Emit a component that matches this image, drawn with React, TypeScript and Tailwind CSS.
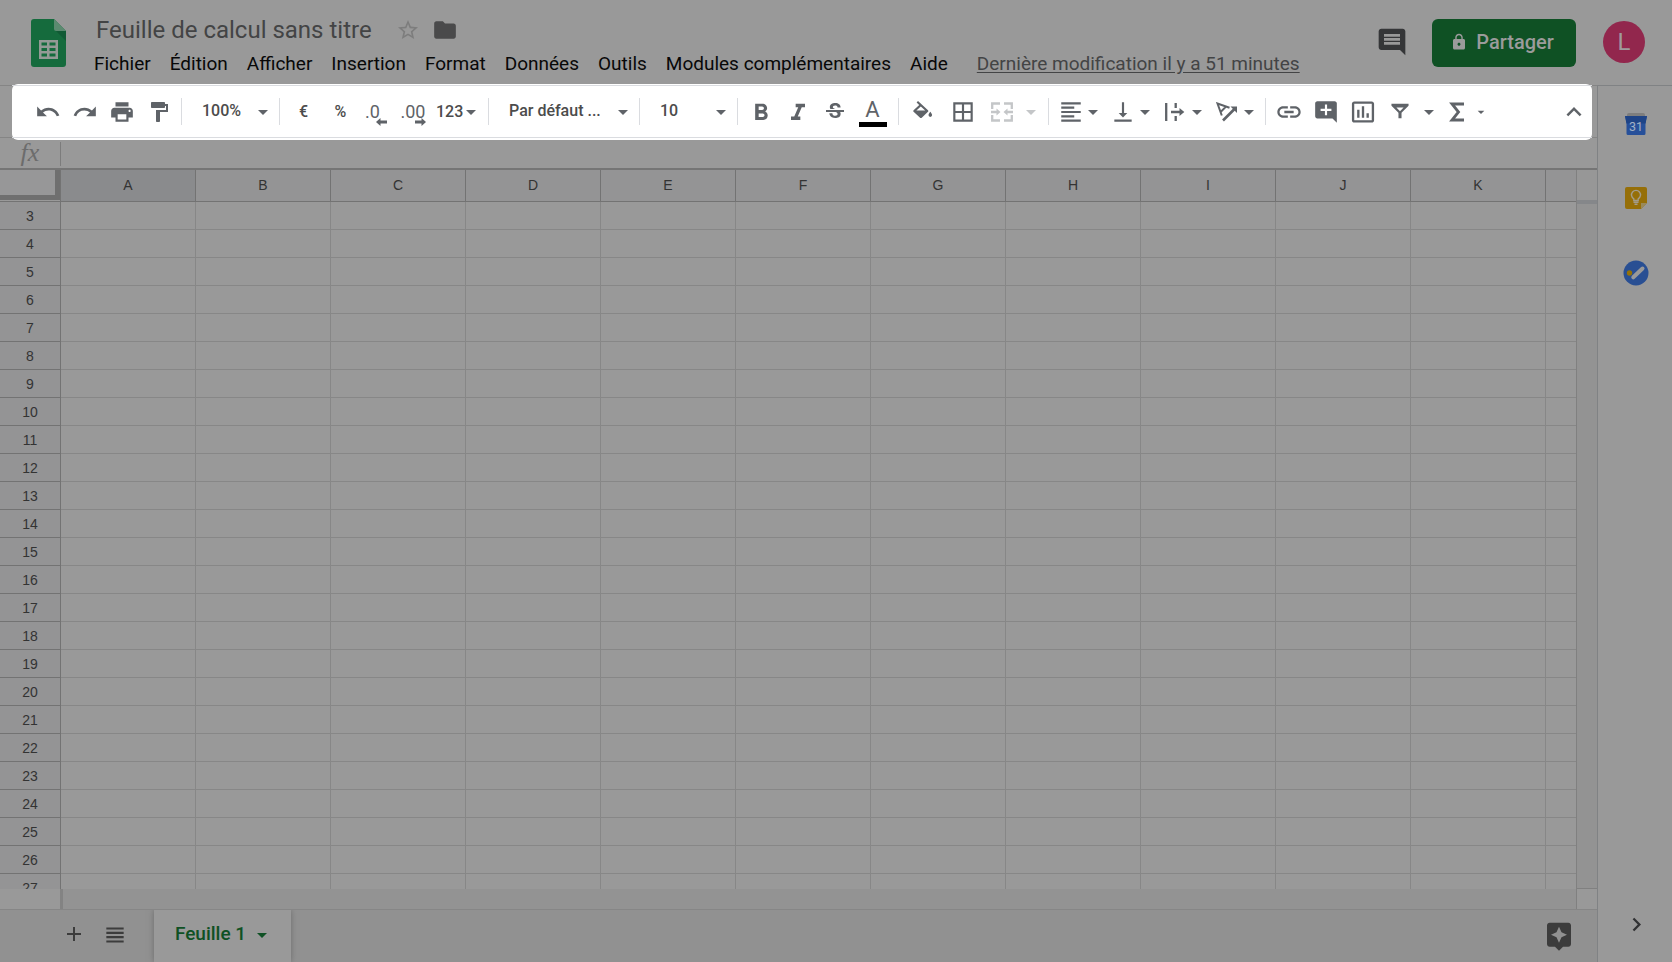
import type { ReactNode } from "react";
import {
  MdAdd,
  MdAddComment,
  MdArrowDropDown,
  MdAssistant,
  MdBorderAll,
  MdFolder,
  MdFormatAlignLeft,
  MdFormatBold,
  MdFormatItalic,
  MdFormatPaint,
  MdInsertChartOutlined,
  MdInsertComment,
  MdKeyboardArrowRight,
  MdKeyboardArrowUp,
  MdLink,
  MdLock,
  MdPrint,
  MdRedo,
  MdStarBorder,
  MdStrikethroughS,
  MdUndo,
  MdVerticalAlignBottom,
  MdViewHeadline,
} from "react-icons/md";

const menus = [
  "Fichier",
  "Édition",
  "Afficher",
  "Insertion",
  "Format",
  "Données",
  "Outils",
  "Modules complémentaires",
  "Aide",
];
const columns = ["A", "B", "C", "D", "E", "F", "G", "H", "I", "J", "K"];
const rows = Array.from({ length: 25 }, (_, i) => i + 3);

function SheetsLogo() {
  return (
    <svg width="35" height="48" viewBox="0 0 35 48" aria-hidden="true">
      <path d="M3 0H23L35 12V45a3 3 0 0 1-3 3H3a3 3 0 0 1-3-3V3a3 3 0 0 1 3-3z" fill="#156b3d" />
      <path d="M25 12H35V22z" fill="#115a35" />
      <path d="M23 0L35 12H25a2 2 0 0 1-2-2z" fill="#5b8a70" />
      <path
        fillRule="evenodd"
        d="M8 21H27V40H8zM10.500 23.500V26.500H16V23.500zM18.500 23.500V26.500H24.500V23.500zM10.500 29V32H16V29zM18.500 29V32H24.500V29zM10.500 34.500V37.500H16V34.500zM18.500 34.500V37.500H24.500V34.500z"
        fill="#949a96"
      />
    </svg>
  );
}

function FillIcon() {
  return (
    <svg width="20" height="18" viewBox="0 0 20 18" fill="currentColor" aria-hidden="true" className="mb-1">
      <path
        fillRule="evenodd"
        d="M5 0L15 9.200a1.200 1.200 0 0 1 0 1.600L9 16.400a1.500 1.500 0 0 1-2.200 0L.6 10.800a1.200 1.200 0 0 1 0-1.600L6.200 3.900L3.600 1.500zM7.800 5.400L3.400 9.500H12.200z"
      />
      <path d="M17.300 10.800s1.800 2 1.800 3.300a1.800 1.800 0 0 1-3.600 0c0-1.300 1.800-3.300 1.800-3.300z" />
    </svg>
  );
}

function MergeIcon() {
  return (
    <svg width="22" height="20" viewBox="0 0 22 20" aria-hidden="true">
      <path
        d="M1.200 7V1.500H9M13 1.500H20.800V7M20.800 13V18.500H13M9 18.500H1.200V13M0 10H6M22 10H16"
        fill="none"
        stroke="currentColor"
        strokeWidth="2.300"
      />
      <path d="M5.500 6.500L9.500 10L5.500 13.500zM16.500 6.500L12.500 10L16.500 13.500z" fill="currentColor" />
    </svg>
  );
}

function OverflowIcon() {
  return (
    <svg width="20" height="20" viewBox="0 0 20 20" aria-hidden="true">
      <path
        d="M1.200 1V19M10.700 1V6M10.700 14V19M6 10H16"
        fill="none"
        stroke="currentColor"
        strokeWidth="2.300"
      />
      <path d="M14.500 6L19.300 10L14.500 14z" fill="currentColor" />
    </svg>
  );
}

function RotateIcon() {
  return (
    <svg width="22" height="20" viewBox="0 0 22 20" aria-hidden="true">
      <path
        d="M13.500 5.800L1.500 1.500L5.800 13.500M10 4.600L4.600 10"
        fill="none"
        stroke="currentColor"
        strokeWidth="2"
      />
      <path d="M7 18.500L18.500 7" fill="none" stroke="currentColor" strokeWidth="2.600" />
      <path d="M14.500 4.500H21V11z" fill="currentColor" />
    </svg>
  );
}

function FilterIcon() {
  return (
    <svg width="20" height="17" viewBox="0 0 20 17" fill="currentColor" aria-hidden="true">
      <path fillRule="evenodd" d="M.5 0H19.500V2L11.700 10V16H8.300V10L.5 2zM6 4L10 8.300L14 4z" />
    </svg>
  );
}

function SumIcon() {
  return (
    <svg width="16" height="20" viewBox="0 0 16 20" aria-hidden="true">
      <path d="M15 2H3L9.500 10L3 18H15" fill="none" stroke="currentColor" strokeWidth="2.800" />
    </svg>
  );
}

function CalendarIcon() {
  return (
    <svg width="22" height="22" viewBox="0 0 22 22" aria-hidden="true">
      <path d="M2 2a2 2 0 0 1 2-2H18a2 2 0 0 1 2 2V5H2z" fill="#7e7e7e" />
      <path d="M0 3H22L20.500 10.500V20.500a1.500 1.500 0 0 1-1.500 1.500H3a1.500 1.500 0 0 1-1.500-1.500V10.500z" fill="#27509a" />
      <path d="M0 3H22L20.500 10.500H1.500z" fill="#1f4487" />
      <text x="11" y="17.500" textAnchor="middle" fontFamily="Roboto, sans-serif" fontSize="12.500" fill="#a3b0c4">
        31
      </text>
    </svg>
  );
}

function KeepIcon() {
  return (
    <svg width="22" height="22" viewBox="0 0 22 22" aria-hidden="true">
      <path d="M2 0H20a2 2 0 0 1 2 2V16L16 22H2a2 2 0 0 1-2-2V2a2 2 0 0 1 2-2z" fill="#966f08" />
      <path d="M16 22V16H22z" fill="#998a5c" />
      <path
        d="M8.800 13.500V11.800a4.500 4.500 0 1 1 4.400 0V13.500zM8.500 15.200H13.500M9.500 17.200H12.500"
        fill="none"
        stroke="#a39c8a"
        strokeWidth="1.400"
      />
    </svg>
  );
}

function TasksIcon() {
  return (
    <svg width="26" height="26" viewBox="0 0 26 26" aria-hidden="true">
      <circle cx="13" cy="13" r="12.500" fill="#294f93" />
      <path d="M10.300 17.300L19.500 8.500" stroke="#999" strokeWidth="4" strokeLinecap="round" />
      <circle cx="6.500" cy="13" r="2.700" fill="#967208" />
    </svg>
  );
}

function Tool({ label, wide = false, children }: { label: string; wide?: boolean; children: ReactNode }) {
  return (
    <button
      type="button"
      aria-label={label}
      className={
        wide
          ? "relative flex h-10 w-10 shrink-0 items-center justify-center"
          : "relative flex h-10 w-[37px] shrink-0 items-center justify-center"
      }
    >
      {children}
    </button>
  );
}

function MenuTool({ label, children }: { label: string; children: ReactNode }) {
  return (
    <button type="button" aria-label={label} className="flex h-10 w-[52px] shrink-0 items-center">
      <span className="flex w-9 justify-center">{children}</span>
      <MdArrowDropDown size={24} className="-ml-2 shrink-0" />
    </button>
  );
}

function Separator() {
  return <span className="mx-1 h-[27px] w-px shrink-0 bg-[#dadce0]" />;
}

function Picker({ label, value, wide = false }: { label: string; value: string; wide?: boolean }) {
  return (
    <div className={wide ? "relative w-[142px] shrink-0" : "relative w-[89px] shrink-0"}>
      <select
        aria-label={label}
        className="h-10 w-full appearance-none bg-transparent pb-px pl-4 text-base font-medium text-[#4c4c4c]"
      >
        <option>{value}</option>
      </select>
      <MdArrowDropDown size={24} className="pointer-events-none absolute top-2 right-0" />
    </div>
  );
}

function Header() {
  return (
    <header className="flex h-[84px] shrink-0 items-start pr-[27px] pl-[31px]">
      <a href="#accueil" aria-label="Accueil Sheets" className="mt-[19px]">
        <SheetsLogo />
      </a>
      <div className="ml-7 flex min-w-0 flex-1 flex-col pt-[14px]">
        <div className="flex h-8 items-center pl-[2px]">
          <h1 className="text-2xl whitespace-nowrap text-[#434445]">Feuille de calcul sans titre</h1>
          <button type="button" aria-label="Suivre" className="ml-6 text-[#7d7d7d]">
            <MdStarBorder size={24} />
          </button>
          <button type="button" aria-label="Déplacer" className="ml-3 text-[#4a4a4b]">
            <MdFolder size={26} />
          </button>
        </div>
        <nav className="flex h-9 items-center gap-[19px] text-[19px] whitespace-nowrap text-[#080808]">
          {menus.map((m) => (
            <button type="button" key={m}>
              {m}
            </button>
          ))}
          <a href="#historique" className="ml-[10px] text-[#434445] underline underline-offset-2">
            Dernière modification il y a 51 minutes
          </a>
        </nav>
      </div>
      <button type="button" aria-label="Commentaires" className="mt-[26px] text-[#353638]">
        <MdInsertComment size={32} />
      </button>
      <button
        type="button"
        className="mt-[19px] ml-6 flex h-12 w-36 items-center justify-center gap-2 rounded-md bg-[#0f5124] pr-1 pb-[2px] text-xl font-medium text-[#9b9b9b]"
      >
        <MdLock size={18} />
        Partager
      </button>
      <button
        type="button"
        aria-label="Compte"
        className="mt-[21px] ml-[27px] flex h-[42px] w-[42px] items-center justify-center rounded-full bg-[#92274d] text-2xl text-[#a09a9c]"
      >
        L
      </button>
    </header>
  );
}

function Toolbar() {
  return (
    <div className="flex h-14 shrink-0">
      <div className="mt-px mb-[2px] w-3 border-y border-[#858585]" />
      <div className="min-w-0 flex-1 rounded-md bg-white pt-px pb-[2px]">
        <div
          role="toolbar"
          aria-label="Mise en forme"
          className="flex h-full items-center border-y border-[#dadce0] pl-[17px] text-[#5f6368]"
        >
          <Tool label="Annuler"><MdUndo size={26} /></Tool>
          <Tool label="Rétablir"><MdRedo size={26} /></Tool>
          <Tool label="Imprimer"><MdPrint size={26} /></Tool>
          <Tool label="Copier la mise en forme"><MdFormatPaint size={24} /></Tool>
          <Separator />
          <Picker label="Zoom" value="100%" />
          <Separator />
          <Tool label="Format devise"><span className="pl-[2px] text-base font-medium text-[#4c4c4c]">€</span></Tool>
          <Tool label="Format pourcentage"><span className="pl-[2px] text-base font-medium text-[#4c4c4c]">%</span></Tool>
          <Tool label="Réduire les décimales">
            <span className="pr-2 text-lg">.0</span>
            <svg className="absolute right-2 bottom-1.5" width="11" height="8" viewBox="0 0 11 8" aria-hidden="true">
              <path d="M0 4L4.500 0V2.600H11V5.400H4.500V8z" fill="currentColor" />
            </svg>
          </Tool>
          <Tool label="Augmenter les décimales">
            <span className="pr-px text-lg">.00</span>
            <svg className="absolute right-1.5 bottom-1.5" width="11" height="8" viewBox="0 0 11 8" aria-hidden="true">
              <path d="M11 4L6.500 0V2.600H0V5.400H6.500V8z" fill="currentColor" />
            </svg>
          </Tool>
          <button type="button" aria-label="Autres formats" className="flex h-10 w-[52px] shrink-0 items-center pl-1">
            <span className="text-base font-medium text-[#4c4c4c]">123</span>
            <MdArrowDropDown size={24} className="-ml-1 shrink-0" />
          </button>
          <Separator />
          <Picker label="Police" value="Par défaut ..." wide />
          <Separator />
          <Picker label="Taille" value="10" />
          <Separator />
          <Tool label="Gras"><MdFormatBold size={28} className="mt-[2px]" /></Tool>
          <Tool label="Italique"><MdFormatItalic size={28} className="mt-[2px]" /></Tool>
          <Tool label="Barré"><MdStrikethroughS size={24} /></Tool>
          <button
            type="button"
            aria-label="Couleur du texte"
            className="flex h-10 w-[41px] shrink-0 flex-col items-center justify-center pt-px pr-[2px]"
          >
            <span className="text-[22px] leading-6">A</span>
            <span className="h-[5px] w-7 bg-black" />
          </button>
          <Separator />
          <Tool label="Couleur de remplissage" wide><FillIcon /></Tool>
          <Tool label="Bordures" wide><MdBorderAll size={26} /></Tool>
          <button
            type="button"
            disabled
            aria-label="Fusionner les cellules"
            className="flex h-10 w-[61px] shrink-0 items-center pl-2 text-[#c4c6c8]"
          >
            <MergeIcon />
            <MdArrowDropDown size={24} className="ml-1.5 shrink-0" />
          </button>
          <Separator />
          <MenuTool label="Alignement horizontal"><MdFormatAlignLeft size={26} /></MenuTool>
          <MenuTool label="Alignement vertical"><MdVerticalAlignBottom size={26} /></MenuTool>
          <MenuTool label="Retour à la ligne"><OverflowIcon /></MenuTool>
          <MenuTool label="Rotation du texte"><RotateIcon /></MenuTool>
          <Separator />
          <Tool label="Insérer un lien"><MdLink size={28} /></Tool>
          <Tool label="Insérer un commentaire"><MdAddComment size={26} /></Tool>
          <Tool label="Insérer un graphique"><MdInsertChartOutlined size={28} /></Tool>
          <button type="button" aria-label="Filtrer" className="flex h-10 w-[60px] shrink-0 items-center pl-2.5">
            <FilterIcon />
            <MdArrowDropDown size={24} className="ml-2 shrink-0" />
          </button>
          <button type="button" aria-label="Fonctions" className="flex h-10 shrink-0 items-center pl-2">
            <SumIcon />
            <MdArrowDropDown size={16} className="ml-2 shrink-0" />
          </button>
          <div className="ml-auto">
            <Tool label="Masquer les menus"><MdKeyboardArrowUp size={30} /></Tool>
          </div>
        </div>
      </div>
      <div className="mt-px mb-[2px] w-[5px] border-y border-[#858585]" />
    </div>
  );
}

function Grid() {
  return (
    <div className="flex min-h-0 flex-1">
      <div className="min-w-0 flex-1 overflow-hidden">
        <table className="w-full table-fixed border-separate border-spacing-0 font-['Liberation_Sans',sans-serif] text-sm text-[#333]">
          <thead>
            <tr className="h-8">
              <th className="w-[61px] border-r border-b border-[#737373] p-0 align-top">
                <div className="h-[30px] w-full border-r-[5px] border-b-[5px] border-[#6f6f6f] bg-[#979798]" />
              </th>
              {columns.map((c) => (
                <th
                  key={c}
                  scope="col"
                  className={
                    c === "A"
                      ? "w-[135px] border-r border-b border-[#737373] bg-[#8a8b8d] p-0 pb-[2px] font-normal"
                      : "w-[135px] border-r border-b border-[#737373] bg-[#949495] p-0 pb-[2px] font-normal"
                  }
                >
                  {c}
                </th>
              ))}
              <th className="border-b border-[#737373] bg-[#949495] p-0" />
            </tr>
          </thead>
          <tbody>
            {rows.map((r) => (
              <tr key={r} className="h-7">
                <th scope="row" className="border-r border-b border-[#737373] bg-[#949495] p-0 font-normal">
                  {r}
                </th>
                {columns.map((c) => (
                  <td key={c} className="border-r border-b border-[#878787] p-0" />
                ))}
                <td className="border-b border-[#878787] p-0" />
              </tr>
            ))}
          </tbody>
        </table>
      </div>
      <div className="flex w-[21px] flex-col border-b border-l border-[#808080] bg-[#939393]">
        <div className="h-[30px] bg-[#979797]" />
        <div className="h-1 bg-[#85878a]" />
      </div>
    </div>
  );
}

function SheetTabs() {
  return (
    <footer className="flex h-[53px] shrink-0 items-center overflow-hidden border-t border-[#868686] bg-[#919191] text-[#3c3c3c]">
      <button type="button" aria-label="Ajouter une feuille" className="ml-[62px] pb-1">
        <MdAdd size={24} />
      </button>
      <button type="button" aria-label="Toutes les feuilles" className="ml-4 pb-[2px]">
        <MdViewHeadline size={26} />
      </button>
      <button
        type="button"
        className="ml-[26px] flex h-full w-[137px] items-center justify-center bg-[#999] pb-[3px] pl-1 text-[19px] font-medium text-[#0f5124] shadow-[0_0_6px_#6b6b6b]"
      >
        Feuille 1
        <MdArrowDropDown size={24} className="ml-1" />
      </button>
      <button type="button" aria-label="Explorer" className="mr-[22px] ml-auto">
        <MdAssistant size={32} />
      </button>
    </footer>
  );
}

export default function App() {
  return (
    <div className="flex h-screen flex-col overflow-hidden bg-[#999] font-['Roboto',sans-serif]">
      <Header />
      <div className="flex min-h-0 flex-1">
        <main className="flex min-w-0 flex-1 flex-col">
          <Toolbar />
          <div className="flex h-7 shrink-0 items-center">
            <label
              htmlFor="formula"
              className="flex h-6 w-[61px] items-center justify-center border-r border-[#7c7c7c] pb-1 font-['Liberation_Serif',serif] text-[26px] text-[#6c6c6c] italic"
            >
              fx
            </label>
            <input id="formula" type="text" className="h-full min-w-0 flex-1 bg-transparent px-2 outline-none" />
          </div>
          <div className="h-[2px] shrink-0 bg-[#757575]" />
          <Grid />
          <div className="flex h-5 shrink-0">
            <div className="w-[60px]" />
            <div className="w-[3px] bg-[#838383]" />
            <div className="flex-1 bg-[#939393]" />
            <div className="w-[21px] border-l border-[#808080]" />
          </div>
          <SheetTabs />
        </main>
        <aside className="mt-px flex w-[75px] shrink-0 flex-col items-center border-t border-l border-[#808284] pt-[27px] pl-[2px]">
          <button type="button" aria-label="Agenda"><CalendarIcon /></button>
          <button type="button" aria-label="Keep" className="mt-[52px]"><KeepIcon /></button>
          <button type="button" aria-label="Tasks" className="mt-[51px]"><TasksIcon /></button>
          <button type="button" aria-label="Masquer le panneau latéral" className="mt-auto mb-6 text-[#303133]">
            <MdKeyboardArrowRight size={27} />
          </button>
        </aside>
      </div>
    </div>
  );
}
